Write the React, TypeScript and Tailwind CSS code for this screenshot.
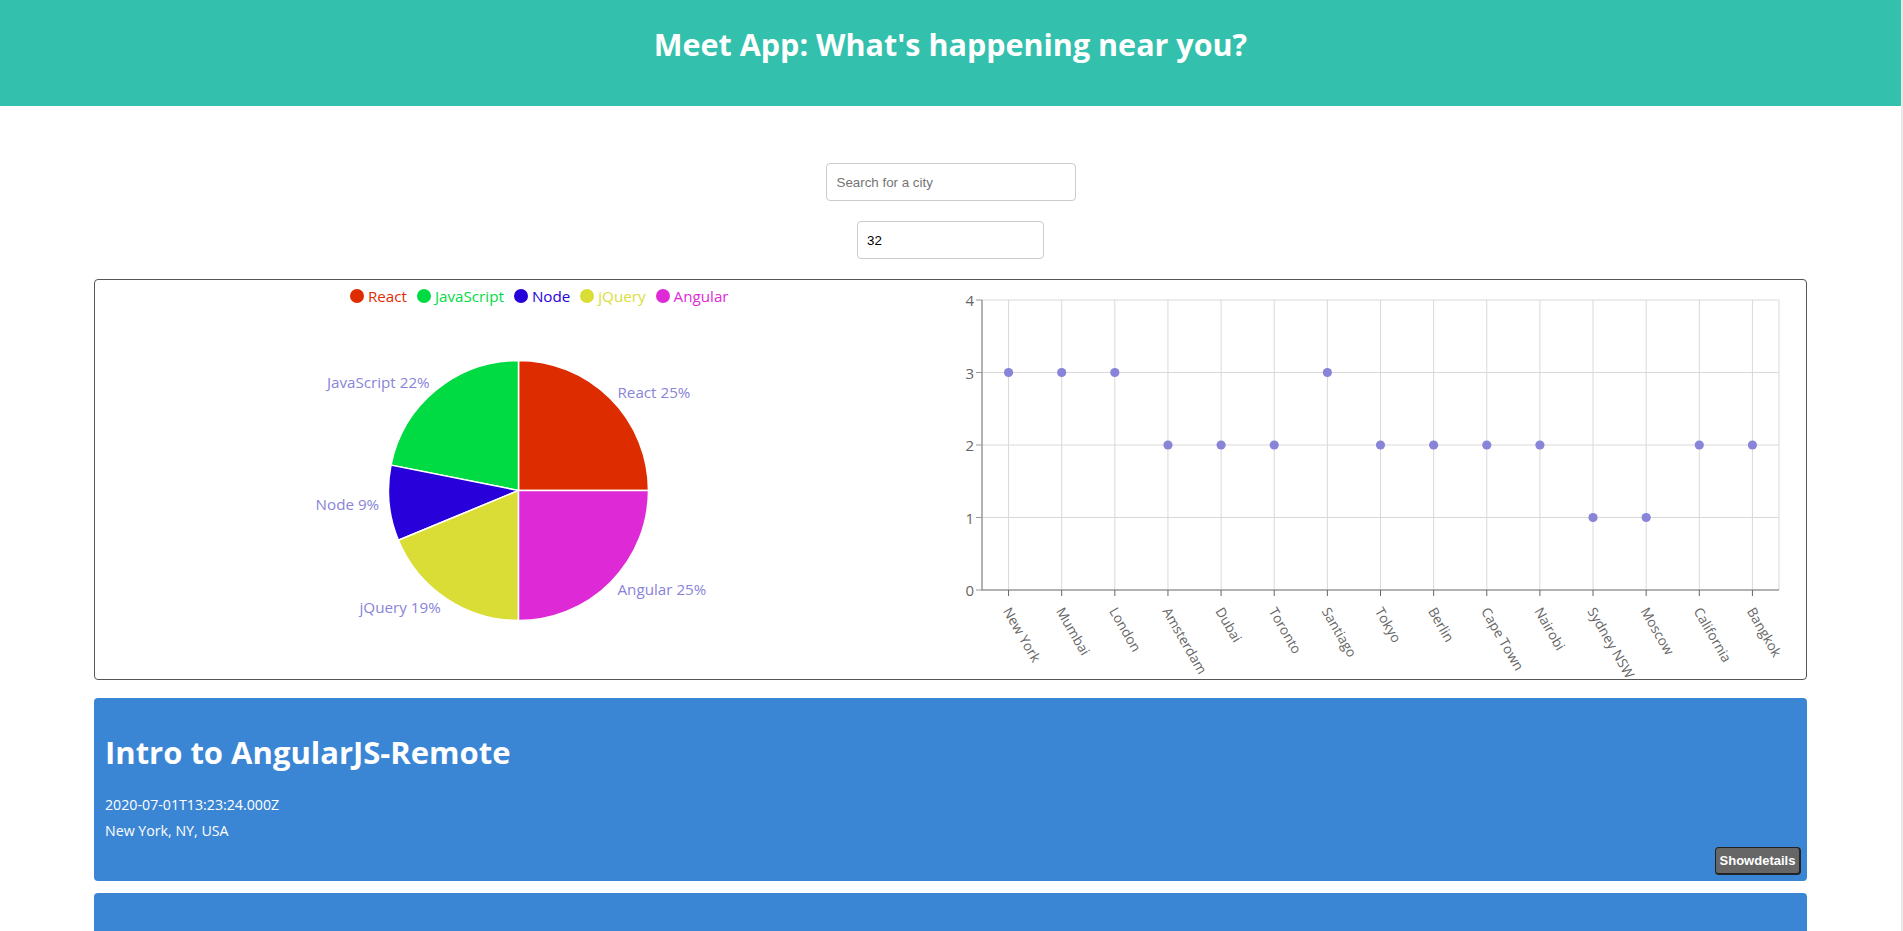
import React from "react";

const pieData = [
  { name: "React", value: 8, color: "#DD2C00" },
  { name: "JavaScript", value: 7, color: "#00DB43" },
  { name: "Node", value: 3, color: "#2800D9" },
  { name: "jQuery", value: 6, color: "#DBDD37" },
  { name: "Angular", value: 8, color: "#DE2AD6" },
];

const scatterData: [string, number][] = [
  ["New York", 3],
  ["Mumbai", 3],
  ["London", 3],
  ["Amsterdam", 2],
  ["Dubai", 2],
  ["Toronto", 2],
  ["Santiago", 3],
  ["Tokyo", 2],
  ["Berlin", 2],
  ["Cape Town", 2],
  ["Nairobi", 2],
  ["Sydney NSW", 1],
  ["Moscow", 1],
  ["California", 2],
  ["Bangkok", 2],
];

const RAD = Math.PI / 180;

function PieChartSvg() {
  const cx = 423.5;
  const cy = 184.5;
  const r = 130;
  const total = pieData.reduce((s, d) => s + d.value, 0);
  let acc = 0;
  const slices = pieData.map((d) => {
    const start = (acc / total) * 360;
    acc += d.value;
    const end = (acc / total) * 360;
    const x1 = cx + r * Math.cos(start * RAD);
    const y1 = cy - r * Math.sin(start * RAD);
    const x2 = cx + r * Math.cos(end * RAD);
    const y2 = cy - r * Math.sin(end * RAD);
    const large = end - start > 180 ? 1 : 0;
    const path = `M ${cx} ${cy} L ${x1} ${y1} A ${r} ${r} 0 ${large} 0 ${x2} ${y2} Z`;
    const mid = (start + end) / 2;
    const lx = cx + 140 * Math.cos(mid * RAD);
    const ly = cy - 140 * Math.sin(mid * RAD);
    const pct = Math.round((d.value / total) * 100);
    return { ...d, path, lx, ly, anchor: lx > cx ? "start" : "end", pct };
  });
  return (
    <svg width="855" height="373" viewBox="0 0 855 373" className="block overflow-visible">
      {slices.map((s) => (
        <path key={s.name} d={s.path} fill={s.color} stroke="#fff" strokeWidth={1.5} />
      ))}
      {slices.map((s) => (
        <text
          key={s.name + "l"}
          x={s.lx}
          y={s.ly}
          textAnchor={s.anchor}
          dominantBaseline="central"
          fill="#8884d8"
          fontSize="15.2"
          fontFamily="'Open Sans', sans-serif"
        >
          {s.name} {s.pct}%
        </text>
      ))}
    </svg>
  );
}

function ScatterChartSvg() {
  const left = 31;
  const right = 828;
  const top = 20;
  const bottom = 310;
  const band = (right - left) / scatterData.length;
  const yOf = (v: number) => bottom - v * ((bottom - top) / 4);
  return (
    <svg width="856" height="399" viewBox="0 0 856 399" className="block overflow-visible">
      {[1, 2, 3, 4].map((v) => (
        <line key={"h" + v} x1={left} x2={right} y1={yOf(v)} y2={yOf(v)} stroke="#d9d9d9" strokeWidth={1} />
      ))}
      {scatterData.map((d, i) => {
        const x = left + band * (i + 0.5);
        return <line key={"v" + i} x1={x} x2={x} y1={top} y2={bottom} stroke="#d9d9d9" strokeWidth={1} />;
      })}
      <line x1={right} x2={right} y1={top} y2={bottom} stroke="#d9d9d9" strokeWidth={1} />
      <line x1={left} x2={left} y1={top} y2={bottom + 0.5} stroke="#999" strokeWidth={1.5} />
      <line x1={left} x2={right} y1={bottom} y2={bottom} stroke="#999" strokeWidth={1.5} />
      {[0, 1, 2, 3, 4].map((v) => (
        <g key={"yt" + v}>
          <line x1={left - 6} x2={left} y1={yOf(v)} y2={yOf(v)} stroke="#999" strokeWidth={1} />
          <text
            x={left - 8}
            y={yOf(v)}
            textAnchor="end"
            dominantBaseline="central"
            fill="#666"
            fontSize="15"
            fontFamily="'Open Sans', sans-serif"
          >
            {v}
          </text>
        </g>
      ))}
      {scatterData.map((d, i) => {
        const x = left + band * (i + 0.5);
        const tx = x - 6;
        const ty = 331;
        return (
          <g key={"xt" + i}>
            <line x1={x} x2={x} y1={bottom} y2={bottom + 6} stroke="#666" strokeWidth={1} />
            <text
              x={tx}
              y={ty}
              transform={`rotate(60, ${tx}, ${ty})`}
              textAnchor="start"
              fill="#666"
              fontSize="13.6"
              fontFamily="'Open Sans', sans-serif"
            >
              {d[0]}
            </text>
          </g>
        );
      })}
      {scatterData.map((d, i) => {
        const x = left + band * (i + 0.5);
        return <circle key={"c" + i} cx={x} cy={yOf(d[1])} r={4.6} fill="#8884d8" />;
      })}
    </svg>
  );
}

function EventCard({ title, date, location }: { title: string; date: string; location: string }) {
  return (
    <div className="rounded-[4px] bg-[#3b86d4] pl-[11px] pr-[6px] pt-[34px] pb-[6px] text-white">
      <h2 className="text-[31px] font-bold leading-[40px]">{title}</h2>
      <div className="mt-[20px] text-[14.2px] leading-[26px]">
        <p>{date}</p>
        <p>{location}</p>
      </div>
      <div className="mt-[3px] flex justify-end">
        <button className="h-[28px] w-[86px] rounded-[4px] border border-[#222] border-r-2 border-b-2 bg-[#666] font-['Liberation_Sans',Arial,sans-serif] text-[13px] font-bold text-white">
          Showdetails
        </button>
      </div>
    </div>
  );
}

export default function App() {
  return (
    <div className="flex min-h-screen bg-white font-['Open_Sans',sans-serif]">
      <div className="min-w-0 flex-1">
        <header className="h-[106px] bg-[#33c1ad] pt-[24px] text-center">
          <h1 className="text-[30.5px] font-bold leading-[40px] text-white">Meet App: What's happening near you?</h1>
        </header>

        <div className="mt-[57px] flex flex-col items-center gap-[20px]">
          <input
            type="text"
            placeholder="Search for a city"
            className="h-[38px] w-[250px] rounded-[4px] border border-[#ccc] px-[10px] font-['Liberation_Sans',Arial,sans-serif] text-[13.33px] text-black placeholder:text-[#757575]"
          />
          <input
            type="number"
            defaultValue={32}
            className="h-[38px] w-[187px] rounded-[4px] border border-[#ccc] px-[9px] font-['Liberation_Sans',Arial,sans-serif] text-[13.33px] text-black"
          />
        </div>

        <div className="mx-auto mt-[20px] grid h-[401px] w-[1713px] grid-cols-2 rounded-[4px] border border-[#555]">
          <div className="flex flex-col">
            <div className="flex h-[26px] items-center justify-center pt-[6px] pl-[33px] text-[15.2px]">
              <span className="mr-[10px] flex items-center">
                <span className="mr-[4px] h-[14px] w-[14px] rounded-full bg-[#DD2C00]" />
                <span className="text-[#DD2C00]">React</span>
              </span>
              <span className="mr-[10px] flex items-center">
                <span className="mr-[4px] h-[14px] w-[14px] rounded-full bg-[#00DB43]" />
                <span className="text-[#00DB43]">JavaScript</span>
              </span>
              <span className="mr-[10px] flex items-center">
                <span className="mr-[4px] h-[14px] w-[14px] rounded-full bg-[#2800D9]" />
                <span className="text-[#2800D9]">Node</span>
              </span>
              <span className="mr-[10px] flex items-center">
                <span className="mr-[4px] h-[14px] w-[14px] rounded-full bg-[#DBDD37]" />
                <span className="text-[#DBDD37]">jQuery</span>
              </span>
              <span className="flex items-center">
                <span className="mr-[4px] h-[14px] w-[14px] rounded-full bg-[#DE2AD6]" />
                <span className="text-[#DE2AD6]">Angular</span>
              </span>
            </div>
            <PieChartSvg />
          </div>
          <div>
            <ScatterChartSvg />
          </div>
        </div>

        <div className="mx-auto mt-[18px] flex w-[1713px] flex-col gap-[12px]">
          <EventCard title="Intro to AngularJS-Remote" date="2020-07-01T13:23:24.000Z" location="New York, NY, USA" />
          <EventCard title="Intro to AngularJS-Remote" date="2020-07-02T13:23:24.000Z" location="Mumbai, India" />
        </div>
      </div>
      <div className="w-[2px] bg-[#e8e8e8]" />
    </div>
  );
}
